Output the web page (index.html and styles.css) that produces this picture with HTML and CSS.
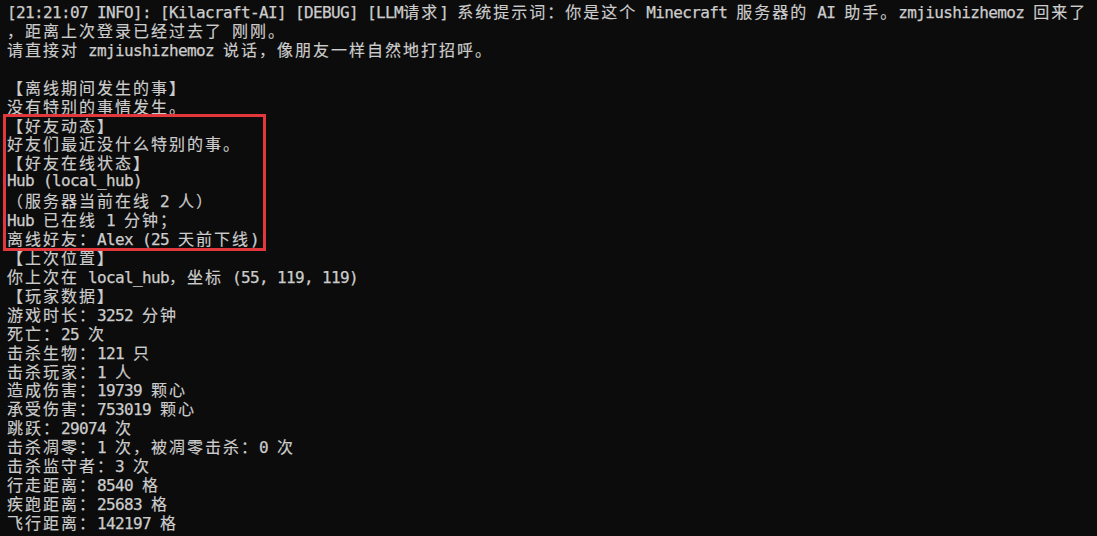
FILE: index.html
```html
<!DOCTYPE html>
<html lang="zh-CN">
<head>
<meta charset="utf-8">
<title>Terminal</title>
<link rel="stylesheet" href="styles.css">
</head>
<body>
<main class="term">
  <div class="ln">[21:21:07 INFO]: [Kilacraft-AI] [DEBUG] [LLM<span class="c">请求</span>] <span class="c">系统提示词：你是这个</span> Minecraft <span class="c">服务器的</span> AI <span class="c">助手。</span>zmjiushizhemoz <span class="c">回来了</span></div>
  <div class="ln"><span class="c">，距离上次登录已经过去了</span> <span class="c">刚刚。</span></div>
  <div class="ln"><span class="c">请直接对</span> zmjiushizhemoz <span class="c">说话，像朋友一样自然地打招呼。</span></div>
  <div class="ln"></div>
  <div class="ln"><span class="c">【离线期间发生的事】</span></div>
  <div class="ln"><span class="c">没有特别的事情发生。</span></div>
  <div class="ln"><span class="c">【好友动态】</span></div>
  <div class="ln"><span class="c">好友们最近没什么特别的事。</span></div>
  <div class="ln"><span class="c">【好友在线状态】</span></div>
  <div class="ln">Hub (local_hub)</div>
  <div class="ln"><span class="c">（服务器当前在线</span> 2 <span class="c">人）</span></div>
  <div class="ln">Hub <span class="c">已在线</span> 1 <span class="c">分钟；</span></div>
  <div class="ln"><span class="c">离线好友：</span>Alex (25 <span class="c">天前下线</span>)</div>
  <div class="ln"><span class="c">【上次位置】</span></div>
  <div class="ln"><span class="c">你上次在</span> local_hub<span class="c">，坐标</span> (55, 119, 119)</div>
  <div class="ln"><span class="c">【玩家数据】</span></div>
  <div class="ln"><span class="c">游戏时长：</span>3252 <span class="c">分钟</span></div>
  <div class="ln"><span class="c">死亡：</span>25 <span class="c">次</span></div>
  <div class="ln"><span class="c">击杀生物：</span>121 <span class="c">只</span></div>
  <div class="ln"><span class="c">击杀玩家：</span>1 <span class="c">人</span></div>
  <div class="ln"><span class="c">造成伤害：</span>19739 <span class="c">颗心</span></div>
  <div class="ln"><span class="c">承受伤害：</span>753019 <span class="c">颗心</span></div>
  <div class="ln"><span class="c">跳跃：</span>29074 <span class="c">次</span></div>
  <div class="ln"><span class="c">击杀凋零：</span>1 <span class="c">次，被凋零击杀：</span>0 <span class="c">次</span></div>
  <div class="ln"><span class="c">击杀监守者：</span>3 <span class="c">次</span></div>
  <div class="ln"><span class="c">行走距离：</span>8540 <span class="c">格</span></div>
  <div class="ln"><span class="c">疾跑距离：</span>25683 <span class="c">格</span></div>
  <div class="ln"><span class="c">飞行距离：</span>142197 <span class="c">格</span></div>
  <div class="mark" aria-hidden="true"></div>
</main>
</body>
</html>
```
FILE: styles.css
```css
html, body {
  margin: 0;
  padding: 0;
  background: #0c0c0c;
}

body {
  width: 1097px;
  height: 536px;
  overflow: hidden;
}

.term {
  position: relative;
  padding: 2px 0 0 7px;
  color: #cccccc;
  font-family: "DejaVu Sans Mono", "Noto Sans CJK SC", monospace;
  font-size: 16px;
  letter-spacing: -0.63px;
  line-height: 18.93px;
  -webkit-text-stroke: 0.25px #cccccc;
}

.ln {
  height: 18.93px;
  white-space: pre;
}

.c {
  font-family: "Noto Sans CJK SC", sans-serif;
  font-size: 16px;
  letter-spacing: 2px;
  -webkit-text-stroke: 0.15px #cccccc;
}

.mark {
  position: absolute;
  left: 3px;
  top: 114px;
  width: 263px;
  height: 137px;
  box-sizing: border-box;
  border: 3px solid #e2383c;
}
```
